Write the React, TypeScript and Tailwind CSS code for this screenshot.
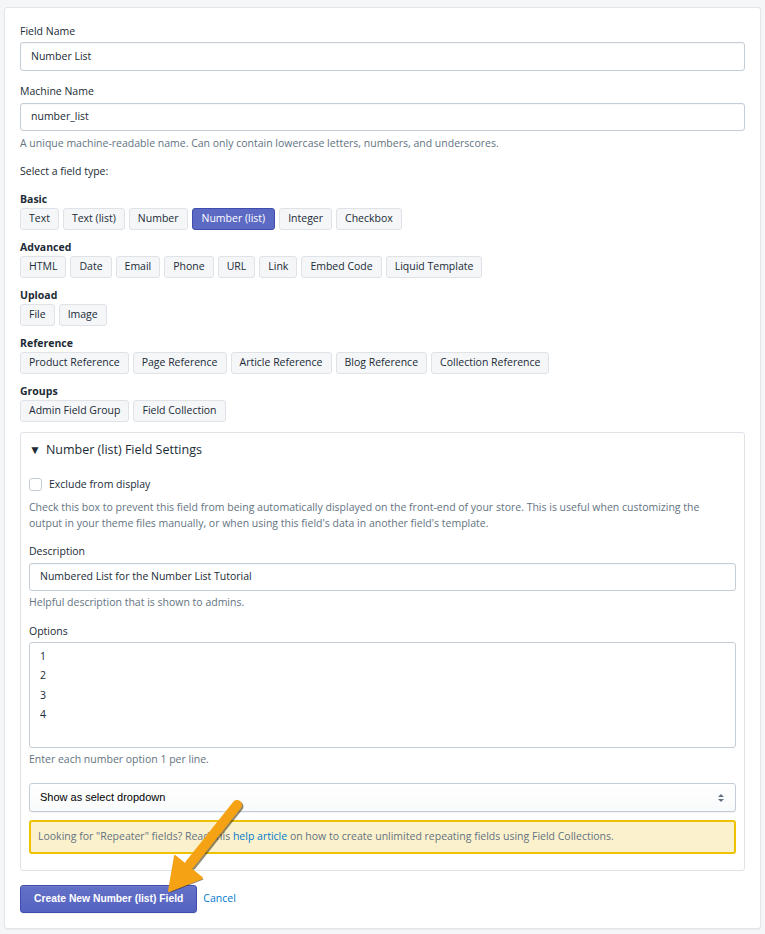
import React from "react";

const sections: { title: string; items: string[] }[] = [
  { title: "Basic", items: ["Text", "Text (list)", "Number", "Number (list)", "Integer", "Checkbox"] },
  { title: "Advanced", items: ["HTML", "Date", "Email", "Phone", "URL", "Link", "Embed Code", "Liquid Template"] },
  { title: "Upload", items: ["File", "Image"] },
  { title: "Reference", items: ["Product Reference", "Page Reference", "Article Reference", "Blog Reference", "Collection Reference"] },
  { title: "Groups", items: ["Admin Field Group", "Field Collection"] },
];

function TypeButton({ label, active }: { label: string; active?: boolean }) {
  return (
    <div
      className={
        active
          ? "h-[22px] px-[9px] flex items-center rounded-[3px] border border-[#3f4eae] bg-[#5c6ac4] text-white"
          : "h-[22px] px-[8px] flex items-center rounded-[3px] border border-[#dfe3e8] bg-[#f4f6f8] text-[#212b36]"
      }
    >
      {label}
    </div>
  );
}

function Label({ children, className = "" }: { children: React.ReactNode; className?: string }) {
  return <div className={`leading-4 text-[#212b36] ${className}`}>{children}</div>;
}

function Help({ children, className = "" }: { children: React.ReactNode; className?: string }) {
  return <div className={`leading-4 text-[#637381] ${className}`}>{children}</div>;
}

function Input({ value, className = "" }: { value: string; className?: string }) {
  return (
    <div
      className={`h-[28px] flex items-center px-[10px] rounded-[3px] border border-[#c4cdd5] bg-white text-[#212b36] shadow-[inset_0_1px_0_rgba(99,115,129,0.05)] ${className}`}
    >
      {value}
    </div>
  );
}

function Arrow() {
  // orange annotation arrow pointing at the create button
  return (
    <svg
      className="absolute left-[150px] top-[790px] pointer-events-none"
      width="110"
      height="110"
      viewBox="0 0 110 110"
    >
      <g transform="translate(1.5 1.5)" opacity="0.55">
        <line x1="87" y1="15" x2="40" y2="74" stroke="#3a2a00" strokeWidth="10" strokeLinecap="round" />
        <polygon points="19,101 52,88 25,66" fill="#3a2a00" />
      </g>
      <line x1="87" y1="15" x2="40" y2="74" stroke="#f5a314" strokeWidth="10" strokeLinecap="round" />
      <polygon points="19,101 52,88 25,66" fill="#f5a314" stroke="#f5a314" strokeWidth="2" strokeLinejoin="round" />
    </svg>
  );
}

export default function App() {
  return (
    <div className="relative min-h-screen bg-[#f4f6f8] pt-[7px] px-[4px] pb-[6px] text-[10.5px] font-['Open_Sans',sans-serif]">
      <div className="w-[757px] rounded-[3px] border border-[#e3e6e9] bg-white px-[15px] pt-[15px] pb-[15px] shadow-[0_1px_1px_rgba(63,63,68,0.05)]">
        <Label>Field Name</Label>
        <Input value="Number List" className="mt-[3px] h-[29px]" />

        <Label className="mt-[12px]">Machine Name</Label>
        <Input value="number_list" className="mt-[4px]" />
        <Help className="mt-[4px]">
          A unique machine-readable name. Can only contain lowercase letters, numbers, and underscores.
        </Help>

        <Label className="mt-[12px]">Select a field type:</Label>

        <div className="mt-[12px] flex flex-col gap-[9px]">
          {sections.map((s) => (
            <div key={s.title}>
              <div className="leading-4 font-bold text-[#212b36]">{s.title}</div>
              <div className="mt-[1px] flex flex-wrap gap-[4px]">
                {s.items.map((it) => (
                  <TypeButton key={it} label={it} active={it === "Number (list)"} />
                ))}
              </div>
            </div>
          ))}
        </div>

        {/* settings panel */}
        <div className="mt-[10px] rounded-[3px] border border-[#dfe3e8] px-[8px] pt-[7px] pb-[16px]">
          <div className="flex items-center gap-[5px] text-[12.5px] leading-5 text-[#212b36]">
            <span className="text-[12px]">▼</span>
            <span>Number (list) Field Settings</span>
          </div>

          <div className="mt-[16px] flex items-center gap-[7px]">
            <div className="w-[13px] h-[13px] rounded-[3px] border border-[#c4cdd5] bg-white" />
            <span className="leading-4 text-[#212b36]">Exclude from display</span>
          </div>
          <Help className="mt-[7px]">
            Check this box to prevent this field from being automatically displayed on the front-end of your store. This
            is useful when customizing the
            <br />
            output in your theme files manually, or when using this field's data in another field's template.
          </Help>

          <Label className="mt-[12px]">Description</Label>
          <Input value="Numbered List for the Number List Tutorial" className="mt-[4px]" />
          <Help className="mt-[3px]">Helpful description that is shown to admins.</Help>

          <Label className="mt-[13px]">Options</Label>
          <div className="mt-[3px] h-[106px] rounded-[3px] border border-[#c4cdd5] bg-white px-[10px] pt-[4px] leading-[19.4px] text-[#212b36]">
            <div>1</div>
            <div>2</div>
            <div>3</div>
            <div>4</div>
          </div>
          <Help className="mt-[3px]">Enter each number option 1 per line.</Help>

          <div className="mt-[16px] h-[29px] flex items-center justify-between rounded-[3px] border border-[#c4cdd5] bg-gradient-to-b from-white to-[#f9fafb] pl-[10px] pr-[11px] shadow-[0_1px_0_rgba(22,29,37,0.05)] font-['Liberation_Sans',sans-serif] text-[11px] text-black">
            <span>Show as select dropdown</span>
            <span className="flex flex-col items-center gap-[2px]">
              <span className="w-0 h-0 border-x-[3px] border-x-transparent border-b-[3px] border-b-[#637381]" />
              <span className="w-0 h-0 border-x-[3px] border-x-transparent border-t-[3px] border-t-[#637381]" />
            </span>
          </div>

          <div className="mt-[8px] h-[34px] flex items-center rounded-[3px] border-2 border-[#eec200] bg-[#fcf1cd] px-[7px] text-[#637381]">
            <span>
              Looking for "Repeater" fields? Read this <span className="text-[#007ace]">help article</span> on how to
              create unlimited repeating fields using Field Collections.
            </span>
          </div>
        </div>

        <div className="mt-[14px] flex items-center gap-[6px]">
          <div className="h-[28px] px-[13px] flex items-center rounded-[3px] border border-[#3f4eae] bg-gradient-to-b from-[#6371c7] to-[#5563c1] text-white text-[10.3px] font-bold font-['Liberation_Sans',sans-serif] shadow-[inset_0_1px_0_0_#6f7bcb,0_1px_0_0_rgba(22,29,37,0.05)]">
            Create New Number (list) Field
          </div>
          <span className="text-[#007ace]">Cancel</span>
        </div>
      </div>
      <Arrow />
    </div>
  );
}
